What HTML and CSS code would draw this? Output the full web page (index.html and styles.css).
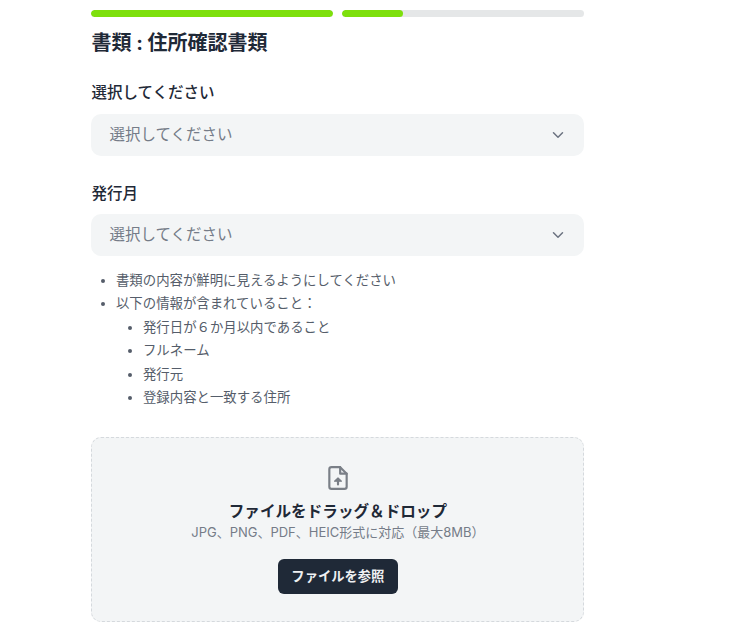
FILE: index.html
```html
<!DOCTYPE html>
<html lang="ja">
<head>
<meta charset="utf-8">
<title>書類</title>
<link rel="stylesheet" href="styles.css">
</head>
<body>
<main class="page">
  <div class="progress">
    <div class="track"><div class="fill fill-full"></div></div>
    <div class="track"><div class="fill fill-quarter"></div></div>
  </div>
  <h1 class="title">書類 : 住所確認書類</h1>
  <div class="field first">
    <div class="label">選択してください</div>
    <div class="select"><span>選択してください</span>
      <svg class="chev" viewBox="0 0 12 8" width="12" height="8"><path d="M1.5 1.8 6 6.2l4.500-4.400" fill="none" stroke="#6b7280" stroke-width="1.500" stroke-linecap="round" stroke-linejoin="round"/></svg>
    </div>
  </div>
  <div class="field second">
    <div class="label">発行月</div>
    <div class="select"><span>選択してください</span>
      <svg class="chev" viewBox="0 0 12 8" width="12" height="8"><path d="M1.5 1.8 6 6.2l4.500-4.400" fill="none" stroke="#6b7280" stroke-width="1.500" stroke-linecap="round" stroke-linejoin="round"/></svg>
    </div>
  </div>
  <ul class="notes">
    <li>書類の内容が鮮明に見えるようにしてください</li>
    <li>以下の情報が含まれていること：
      <ul class="sub">
        <li>発行日が６か月以内であること</li>
        <li>フルネーム</li>
        <li>発行元</li>
        <li>登録内容と一致する住所</li>
      </ul>
    </li>
  </ul>
  <section class="drop">
    <svg class="file-icon" viewBox="0 0 24 24" width="26" height="26" fill="none" stroke="#7a7f87" stroke-width="2" stroke-linecap="round" stroke-linejoin="round">
      <path d="M14 2H6a2 2 0 0 0-2 2v16a2 2 0 0 0 2 2h12a2 2 0 0 0 2-2V8z"/>
      <path d="M14 2v6h6"/>
      <path d="M12 18v-4.500" stroke-width="2"/>
      <path d="M8.800 15 12 11.800 15.200 15z" fill="#7a7f87" stroke-width="1"/>
    </svg>
    <div class="drop-title">ファイルをドラッグ＆ドロップ</div>
    <div class="drop-sub">JPG、PNG、PDF、HEIC形式に対応（最大8MB）</div>
    <button class="browse" type="button">ファイルを参照</button>
  </section>
</main>
</body>
</html>
```

FILE: styles.css
```css
* { box-sizing: border-box; }
html, body { margin: 0; padding: 0; background: #fff; }
body { height: 632px; overflow: hidden; font-family: Inter, "Noto Sans CJK JP", "Noto Sans", sans-serif; color: #1f2937; }
.page { width: 493px; margin-left: 91.4px; padding-top: 10px; }
.progress { display: flex; gap: 9px; }
.track { flex: 1; height: 7px; border-radius: 4px; background: #e5e7e8; overflow: hidden; }
.fill { height: 100%; background: #7ee00c; border-radius: 4px; }
.fill-full { width: 100%; }
.fill-quarter { width: 25%; }
.title { margin: 12px 0 0; font-size: 20px; line-height: 28px; font-weight: 700; color: #1f2937; }
.field.first { margin-top: 25px; }
.field.second { margin-top: 27px; }
.label { font-size: 15.5px; line-height: 22px; font-weight: 500; color: #1f2937; }
.first .select { margin-top: 10px; }
.second .select { margin-top: 9px; }
.select { height: 42px; border-radius: 10px; background: #f3f5f6; padding: 0 20px 4px 18px; display: flex; align-items: center; justify-content: space-between; font-size: 15.5px; color: #757c88; }
.chev { margin-top: 4px; }
.notes { margin: 13px 0 0; padding: 0 0 0 24.6px; font-size: 13.4px; line-height: 23.4px; color: #555d6a; }
.sub { margin: 0; padding: 0 0 0 27px; list-style: disc; }
.drop { margin-top: 28px; height: 185px; border: 1px dashed #d5d9dd; border-radius: 10px; background: #f3f5f6; display: flex; flex-direction: column; align-items: center; padding-top: 27px; }
.drop-title { margin-top: 10px; font-size: 15.6px; line-height: 21px; font-weight: 700; color: #1f2937; }
.drop-sub { font-size: 13px; line-height: 21px; color: #757c88; }
.browse { margin-top: 16px; width: 120px; height: 35px; border: 0; border-radius: 6px; background: #1f2937; color: #eef0f2; font: 700 13.3px/1 Inter, "Noto Sans CJK JP", sans-serif; }
```
